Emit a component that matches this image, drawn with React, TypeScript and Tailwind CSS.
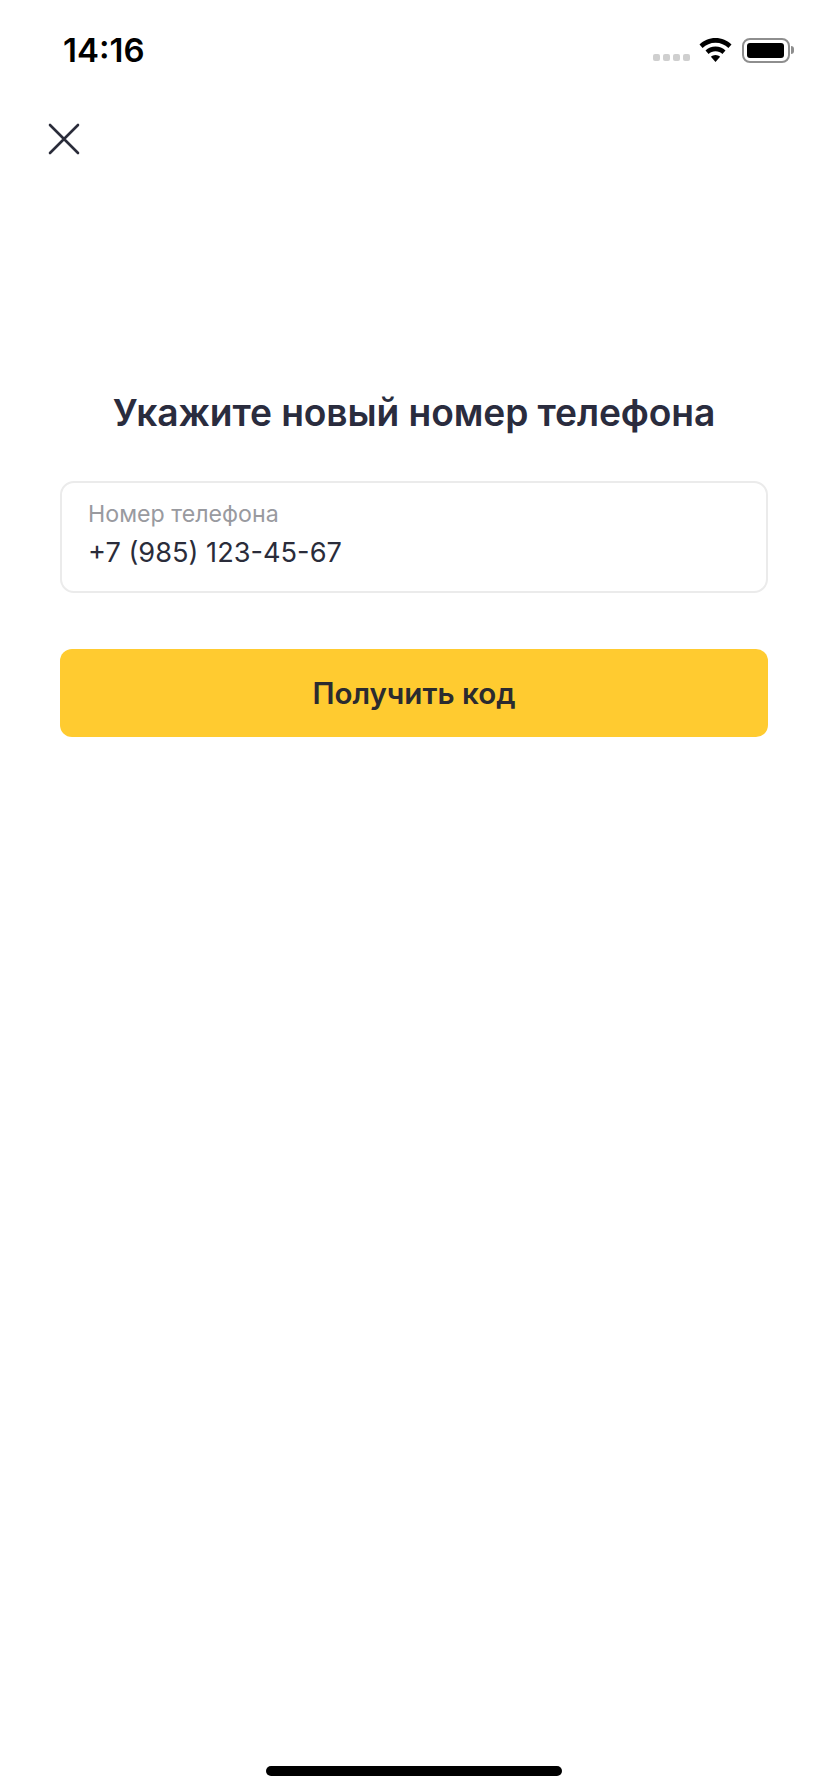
import { FC } from 'react';

const StatusBar: FC = () => (
  <div className="flex h-[100px] items-center justify-between pl-[63px] pr-[34px]">
    <span className="text-[33px] leading-none font-semibold text-black">14:16</span>
    <div className="flex items-center">
      <div className="mt-[14px] flex gap-[3px]">
        <span className="h-[7px] w-[7px] rounded-[2px] bg-[#cfcfcf]" />
        <span className="h-[7px] w-[7px] rounded-[2px] bg-[#cfcfcf]" />
        <span className="h-[7px] w-[7px] rounded-[2px] bg-[#cfcfcf]" />
        <span className="h-[7px] w-[7px] rounded-[2px] bg-[#cfcfcf]" />
      </div>
      <svg className="ml-[9px]" width="33" height="24" viewBox="0 0 33 24">
        <path d="M16.5 0C10.2 0 4.6 2.5.5 6.5L3.6 9.9C7 6.7 11.5 4.7 16.5 4.7s9.5 2 12.9 5.2l3.1-3.4C28.4 2.5 22.8 0 16.5 0z" fill="#000" />
        <path d="M16.5 8.6c-3.9 0-7.4 1.5-10 4l3.1 3.4c1.8-1.7 4.2-2.7 6.9-2.7s5.1 1 6.9 2.7l3.1-3.4c-2.6-2.5-6.1-4-10-4z" fill="#000" />
        <path d="M16.5 17c-1.8 0-3.4.7-4.6 1.8l4.6 5.2 4.6-5.2C19.9 17.7 18.3 17 16.5 17z" fill="#000" />
      </svg>
      <div className="ml-[10px] flex items-center">
        <div className="h-[25px] w-[48px] rounded-[8px] border-2 border-[#8e8e8e] p-[3px]">
          <div className="h-full w-[37px] rounded-[3px] bg-black" />
        </div>
        <div className="ml-px h-[8px] w-[3px] rounded-r-[3px] bg-[#8e8e8e]" />
      </div>
    </div>
  </div>
);

const App: FC = () => {
  return (
    <div className="relative flex h-[1792px] w-[828px] flex-col overflow-hidden bg-white font-['Inter','Noto_Sans',sans-serif]">
      <StatusBar />
      <button className="mt-[22px] ml-[47px] h-[34px] w-[34px] text-[#2a2c3a]">
        <svg width="34" height="34" viewBox="0 0 34 34" fill="none" stroke="currentColor" strokeWidth="2.6" strokeLinecap="round">
          <path d="M3 3L31 31M31 3L3 31" />
        </svg>
      </button>
      <main className="mt-[235px] flex flex-col px-[60px]">
        <h1 className="text-center text-[37.2px] leading-[44px] font-semibold tracking-[-0.1px] text-[#2a2c3e]">
          Укажите новый номер телефона
        </h1>
        <div className="mt-[46px] flex h-[112px] flex-col rounded-[14px] border-2 border-[#ebebeb] pt-[18px] pl-[26px]">
          <label className="text-[23.2px] leading-[26px] text-[#999a9f]">Номер телефона</label>
          <span className="mt-[10px] text-[27.2px] leading-[32px] text-[#2a2c3a]">+7 (985) 123-45-67</span>
        </div>
        <button className="mt-[56px] h-[88px] rounded-[12px] bg-[#ffcb30] text-[29.6px] font-semibold text-[#2b2b2f]">
          Получить код
        </button>
      </main>
      <div className="absolute bottom-[16px] left-[266px] h-[10px] w-[296px] rounded-full bg-black" />
    </div>
  );
};

export default App;
